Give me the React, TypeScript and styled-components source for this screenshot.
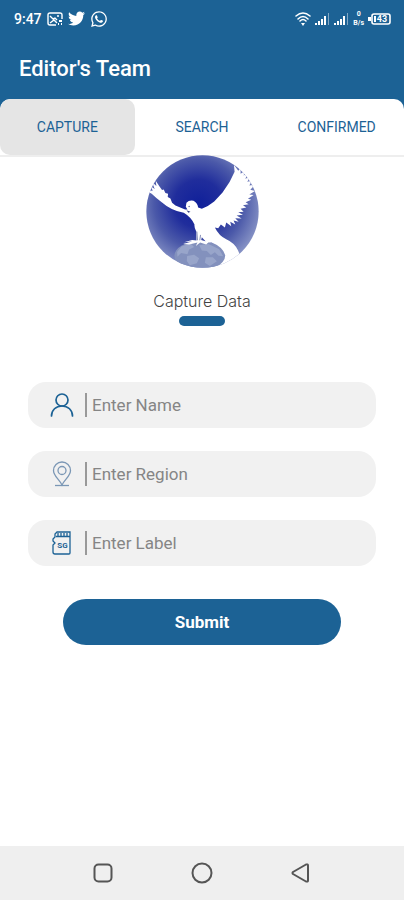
import React, { useState } from "react";
import styled, { createGlobalStyle } from "styled-components";
import { FaTwitter, FaWhatsapp } from "react-icons/fa";

const BLUE = "#1c6295";

const GlobalStyle = createGlobalStyle`
  * { box-sizing: border-box; }
  body {
    margin: 0;
    background: #fff;
    font-family: Roboto, "Liberation Sans", sans-serif;
  }
  button, input { font: inherit; }
`;

const Screen = styled.div`
  display: flex;
  flex-direction: column;
  min-height: 100vh;
  background: #fff;
`;

const Header = styled.header`
  background: ${BLUE};
  color: #fff;
`;

const StatusBar = styled.div`
  display: flex;
  align-items: center;
  justify-content: space-between;
  height: 37px;
  padding: 0 13px 0 14px;
`;

const StatusGroup = styled.div<{ $gap: number }>`
  display: flex;
  align-items: center;
  gap: ${(p) => p.$gap}px;
`;

const Clock = styled.span`
  font-size: 14px;
  font-weight: 500;
  line-height: 16px;
`;

const Rate = styled.span`
  display: flex;
  flex-direction: column;
  align-items: center;
  font-size: 7px;
  font-weight: 700;
  line-height: 9px;
`;

const Title = styled.h1`
  margin: 0;
  padding: 18px 19px 16px;
  font-size: 22px;
  font-weight: 500;
  line-height: 28px;
`;

const Tabs = styled.div`
  display: grid;
  grid-template-columns: repeat(3, 1fr);
  height: 58px;
  overflow: hidden;
  border-bottom: 2px solid #eee;
  border-radius: 10px 10px 0 0;
  background: #fff;
`;

const Tab = styled.button<{ $active: boolean }>`
  border: 0;
  border-radius: 10px;
  padding: 0;
  background: ${(p) => (p.$active ? "#e5e5e5" : "transparent")};
  color: ${BLUE};
  font-size: 14px;
  font-weight: 400;
  cursor: pointer;
`;

const Content = styled.main`
  display: flex;
  flex: 1;
  flex-direction: column;
  align-items: center;
  margin-top: -2px;
`;

const Logo = styled.svg`
  display: block;
  width: 113px;
  height: 113px;
`;

const Caption = styled.h2`
  margin: 24px 0 6px;
  color: #444;
  font-family: Inter, sans-serif;
  font-size: 16px;
  font-weight: 300;
  line-height: 18px;
`;

const Underline = styled.div`
  width: 46px;
  height: 10px;
  border-radius: 5px;
  background: ${BLUE};
`;

const Form = styled.form`
  display: flex;
  flex-direction: column;
  align-self: stretch;
  gap: 23px;
  padding: 56px 28px 0;
`;

const Field = styled.div`
  display: flex;
  align-items: center;
  height: 46px;
  padding: 0 16px 0 22px;
  border-radius: 18px;
  background: #f1f1f1;
`;

const FieldLabel = styled.label`
  display: flex;
  align-items: center;
  width: 35px;
  color: ${BLUE};
`;

const FieldInput = styled.input`
  flex: 1;
  min-width: 0;
  height: 24px;
  padding: 0 0 0 5px;
  border: 0;
  border-left: 2px solid #999;
  outline: none;
  background: transparent;
  color: #444;
  font-size: 17px;
  &::placeholder { color: #858585; opacity: 1; }
`;

const Submit = styled.button`
  height: 46px;
  margin: 10px 35px 0;
  border: 0;
  border-radius: 23px;
  background: ${BLUE};
  color: #fff;
  font-size: 17px;
  font-weight: 700;
  cursor: pointer;
`;

const NavBar = styled.nav`
  display: flex;
  align-items: center;
  justify-content: center;
  gap: 75px;
  height: 54px;
  background: #efefef;
`;

const NavButton = styled.button`
  display: flex;
  padding: 0;
  border: 0;
  background: none;
  color: #555;
  cursor: pointer;
`;

const PictureIcon = () => (
  <svg width="16" height="14" viewBox="0 0 16 14" fill="none" stroke="#fff" strokeWidth="1.4" aria-hidden="true">
    <path d="M15 7V3Q15 1 13 1H3Q1 1 1 3V11Q1 13 3 13H9" />
    <path d="M3 4L6 7L8 6L10 8M3 11L7 8L10 11M10 4H12" />
    <path d="M12 9H15M11 12H12M14 12H15" strokeWidth="2" />
  </svg>
);

const WifiIcon = () => (
  <svg width="16" height="14" viewBox="0 0 16 14" fill="none" stroke="#fff" strokeWidth="1.5" strokeLinecap="round" aria-hidden="true">
    <path d="M1 4Q8 -2 15 4M3 7Q8 2 13 7M5 9Q8 6 11 9" />
    <path d="M6 11H10L8 14Z" fill="#fff" stroke="none" />
  </svg>
);

const SignalIcon = () => (
  <svg width="15" height="14" viewBox="0 0 15 14" fill="#fff" aria-hidden="true">
    <path d="M0 11h2v2H0zM3 9h2v4H3zM6 7h2v6H6zM9 4h2v9H9z" />
    <path d="M13 1h1v12h-1z" opacity=".45" />
  </svg>
);

const BatteryIcon = () => (
  <svg width="23" height="12" viewBox="0 0 23 12" aria-label="Battery 43">
    <rect x="4" y="1" width="18" height="10" rx="2" fill="none" stroke="#fff" strokeWidth="1.6" />
    <path d="M0 4h3v4H0z" fill="#fff" />
    <path d="M6 3h2v6H6z" fill="#fff" />
    <text x="14" y="9" fontSize="9" fontWeight="700" textAnchor="middle" fill="#fff">43</text>
  </svg>
);

const PersonIcon = () => (
  <svg width="24" height="24" viewBox="0 0 24 24" fill="none" stroke="currentColor" strokeWidth="1.7" strokeLinecap="round" aria-hidden="true">
    <circle cx="12" cy="7" r="6" />
    <path d="M1.5 23C1.5 17 6 13 12 13S22.500 17 22.500 23" />
  </svg>
);

const PinIcon = () => (
  <svg width="24" height="26" viewBox="0 0 24 26" fill="none" stroke="#7b97b5" strokeWidth="1.3" aria-hidden="true">
    <path d="M12 24C9 18 3.500 15 3.500 9.500A8.500 8.500 0 0 1 20.500 9.500C20.500 15 15 18 12 24Z" />
    <circle cx="12" cy="9.500" r="4" />
    <path d="M5 24.500H19" />
  </svg>
);

const CardIcon = () => (
  <svg width="24" height="24" viewBox="0 0 24 24" fill="none" stroke="currentColor" strokeWidth="1.3" aria-hidden="true">
    <path d="M7 1H20V22Q20 23 19 23H5Q3 23 3 21V14L5 12L3 10V8L5 6V3Z" />
    <path d="M6 5.500H20M8 2V5M11 2V5M14 2V5M17 2V5" />
    <text x="12.500" y="17" fontSize="8" fontWeight="700" textAnchor="middle" fill="currentColor" stroke="none">SG</text>
  </svg>
);

const DoveLogo = () => (
  <Logo viewBox="20 17 338 338" role="img" aria-label="Dove standing on a globe">
    <defs>
      <radialGradient id="sky" gradientUnits="userSpaceOnUse" cx="177" cy="163" r="190">
        <stop offset="0" stopColor="#10209a" />
        <stop offset=".38" stopColor="#202d9c" />
        <stop offset=".7" stopColor="#4b59a9" />
        <stop offset="1" stopColor="#8490c4" />
      </radialGradient>
      <clipPath id="disc">
        <circle cx="189" cy="186" r="168" />
      </clipPath>
    </defs>
    <g clipPath="url(#disc)">
      <path d="M20 17H358V355H20Z" fill="url(#sky)" />
      <ellipse cx="181" cy="318" rx="76" ry="43" fill="#8391bd" />
      <g fill="#98a5ca">
        <path d="M126 291L153 281L164 292L149 300L144 314L125 310L114 321L113 307Z" />
        <path d="M179 287L207 283L239 299L251 320L237 318L226 308L214 316L202 304L187 303Z" />
        <path d="M143 319L164 315L179 326L172 341L151 347L142 334ZM199 323L220 323L232 335L211 349L196 339Z" />
      </g>
      <path
        fill="#fff"
        d="M20 123L40 124L35 111L46 119L38 98L51 110L49 94L61 112L68 122L73 120L78 131L86 133L85 143L93 147L98 160L108 168L137 180L144 180L139 172L141 160Q149 151 162 154Q174 160 176 174L187 178Q207 170 224 156L249 129L270 98L285 67L283 46L296 64L303 55V73L316 64L312 78L326 70L317 88L332 82L323 97L337 94L329 108L346 106L332 121L346 125L329 135L342 137L325 148L335 151L318 158L327 164L310 167L320 174L303 178L312 187L296 188L310 196L291 198L306 207L287 206L297 217L282 213L287 225L272 217L275 230L260 219L256 234L244 225L236 236L226 234Q238 259 260 269Q285 280 295 302L301 316L320 356H225Q257 338 257 317Q250 292 216 279L201 278L187 263L185 271L207 278L200 285L182 279L169 289L174 279L149 285L131 283L158 276L134 278L158 271L171 273L170 245Q164 235 165 225Q155 203 133 190Q95 183 68 159Q49 145 37 133Z"
      />
      <circle cx="149" cy="171" r="2" fill="#4d599a" />
      <path d="M141 182L153 187L147 190Z" fill="#303b80" />
      <path d="M172 246L174 272M183 256L181 272" stroke="#465493" strokeWidth="2" />
    </g>
  </Logo>
);

const TABS = ["CAPTURE", "SEARCH", "CONFIRMED"];

const FIELDS = [
  { id: "name", hint: "Enter Name", Icon: PersonIcon },
  { id: "region", hint: "Enter Region", Icon: PinIcon },
  { id: "label", hint: "Enter Label", Icon: CardIcon },
];

export default function App() {
  const [active, setActive] = useState(TABS[0]);
  return (
    <Screen>
      <GlobalStyle />
      <Header>
        <StatusBar>
          <StatusGroup $gap={5}>
            <Clock>9:47</Clock>
            <PictureIcon />
            <FaTwitter size={17} />
            <FaWhatsapp size={18} />
          </StatusGroup>
          <StatusGroup $gap={4}>
            <WifiIcon />
            <SignalIcon />
            <SignalIcon />
            <Rate>
              <span>0</span>
              <span>B/s</span>
            </Rate>
            <BatteryIcon />
          </StatusGroup>
        </StatusBar>
        <Title>Editor's Team</Title>
        <Tabs role="tablist">
          {TABS.map((name) => (
            <Tab
              key={name}
              type="button"
              role="tab"
              aria-selected={active === name}
              $active={active === name}
              onClick={() => setActive(name)}
            >
              {name}
            </Tab>
          ))}
        </Tabs>
      </Header>
      <Content>
        <DoveLogo />
        <Caption>Capture Data</Caption>
        <Underline />
        <Form onSubmit={(e) => e.preventDefault()}>
          {FIELDS.map(({ id, hint, Icon }) => (
            <Field key={id}>
              <FieldLabel htmlFor={id} aria-label={hint}>
                <Icon />
              </FieldLabel>
              <FieldInput id={id} type="text" placeholder={hint} />
            </Field>
          ))}
          <Submit type="submit">Submit</Submit>
        </Form>
      </Content>
      <NavBar aria-label="System">
        <NavButton type="button" aria-label="Recent apps">
          <svg width="24" height="24" viewBox="0 0 24 24" fill="none" stroke="currentColor" strokeWidth="2">
            <rect x="3.500" y="3.500" width="17" height="17" rx="4" />
          </svg>
        </NavButton>
        <NavButton type="button" aria-label="Home">
          <svg width="24" height="24" viewBox="0 0 24 24" fill="none" stroke="currentColor" strokeWidth="2">
            <circle cx="12" cy="12" r="9.500" />
          </svg>
        </NavButton>
        <NavButton type="button" aria-label="Back">
          <svg width="24" height="24" viewBox="0 0 24 24" fill="none" stroke="currentColor" strokeWidth="2" strokeLinejoin="round">
            <path d="M4 11Q3 12 4 13L17 20.500Q19 21 19 19.500V4.500Q19 3 17 3.500Z" />
          </svg>
        </NavButton>
      </NavBar>
    </Screen>
  );
}
